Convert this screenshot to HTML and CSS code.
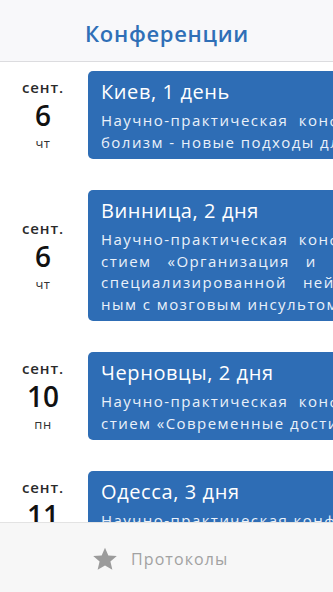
FILE: index.html
```html
<!DOCTYPE html>
<html lang="ru">
<head>
<meta charset="utf-8">
<title>Конференции</title>
<link rel="stylesheet" href="styles.css">
</head>
<body>
<div class="app">
  <header class="nav">
    <h1 class="nav-title">Конференции</h1>
  </header>
  <main class="list">
    <div class="row">
      <div class="date">
        <div class="month">сент.</div>
        <div class="day">6</div>
        <div class="wd">чт</div>
      </div>
      <div class="card">
        <div class="card-title">Киев, 1 день</div>
        <div class="card-text">
          <div class="ln">Научно-практическая&nbsp; конференция «Мета-</div>
          <div class="ln">болизм - новые подходы для лечения</div>
        </div>
      </div>
    </div>
    <div class="row">
      <div class="date">
        <div class="month">сент.</div>
        <div class="day">6</div>
        <div class="wd">чт</div>
      </div>
      <div class="card">
        <div class="card-title">Винница, 2 дня</div>
        <div class="card-text">
          <div class="ln">Научно-практическая&nbsp; конференция с уча-</div>
          <div class="ln">стием&nbsp;&nbsp; «Организация&nbsp;&nbsp; и&nbsp;&nbsp; оказание</div>
          <div class="ln">специализированной&nbsp;&nbsp; неймедицинской</div>
          <div class="ln">ным с мозговым инсультом»</div>
        </div>
      </div>
    </div>
    <div class="row">
      <div class="date">
        <div class="month">сент.</div>
        <div class="day">10</div>
        <div class="wd">пн</div>
      </div>
      <div class="card">
        <div class="card-title">Черновцы, 2 дня</div>
        <div class="card-text">
          <div class="ln">Научно-практическая&nbsp; конференция с уча-</div>
          <div class="ln">стием «Современные достижения</div>
        </div>
      </div>
    </div>
    <div class="row">
      <div class="date">
        <div class="month">сент.</div>
        <div class="day">11</div>
        <div class="wd">вт</div>
      </div>
      <div class="card">
        <div class="card-title">Одесса, 3 дня</div>
        <div class="card-text">
          <div class="ln">Научно-практическая конференция</div>
          <div class="ln">стием</div>
        </div>
      </div>
    </div>
  </main>
  <nav class="tabbar">
    <svg class="star" viewBox="0 0 24 24" width="26" height="26" aria-hidden="true">
      <path d="M12 1.5l3.1 7.2 7.8.6-5.9 5.1 1.8 7.6L12 17.9 5.2 22l1.8-7.6-5.9-5.1 7.8-.6z" fill="#9b9b9b"/>
    </svg>
    <span class="tab-label">Протоколы</span>
  </nav>
</div>
</body>
</html>
```

FILE: styles.css
```css
html, body {
  margin: 0;
  padding: 0;
  background: #ffffff;
}

body {
  width: 333px;
  height: 592px;
  overflow: hidden;
  font-family: "Open Sans", Roboto, "Liberation Sans", sans-serif;
}

.app {
  position: relative;
  width: 333px;
  height: 592px;
  overflow: hidden;
}

.nav {
  height: 62px;
  background: #f8f8fa;
  border-bottom: 1px solid #dcdcdf;
  display: flex;
  align-items: center;
  justify-content: center;
  padding-top: 4px;
  padding-left: 1px;
  box-sizing: border-box;
}

.nav-title {
  margin: 0;
  font-size: 22px;
  font-weight: 600;
  color: #2f6fb7;
  letter-spacing: 0.7px;
}

.list {
  display: flex;
  flex-direction: column;
  gap: 31px;
  padding-top: 9px;
}

.row {
  display: flex;
  align-items: center;
}

.date {
  flex: none;
  width: 88px;
  padding-right: 2px;
  box-sizing: border-box;
  display: flex;
  flex-direction: column;
  align-items: center;
  color: #1e1e1e;
}

.month {
  font-size: 15px;
  font-weight: 600;
  line-height: 20px;
  letter-spacing: 0.9px;
  color: #2a2a2a;
}

.day {
  font-size: 28px;
  font-weight: 600;
  line-height: 36px;
  color: #111;
}

.wd {
  font-size: 13px;
  line-height: 20px;
  letter-spacing: 0.5px;
  color: #333;
}

.card {
  flex: none;
  width: 420px;
  background: #2e6db5;
  border-radius: 5px;
  padding: 8px 12px 6px 13px;
  box-sizing: border-box;
  color: #ffffff;
}

.card-title {
  font-size: 20px;
  line-height: 26px;
  font-weight: 400;
  letter-spacing: 0.6px;
}

.card-text {
  margin-top: 5px;
  font-size: 15px;
  line-height: 21.5px;
  letter-spacing: 1.45px;
  color: #eaf1fa;
}

.ln {
  white-space: nowrap;
}

.tabbar {
  position: absolute;
  left: 0;
  right: 0;
  bottom: 0;
  height: 70px;
  background: #f7f7f7;
  border-top: 1px solid #e3e3e3;
  box-sizing: border-box;
  display: flex;
  align-items: center;
  padding-left: 92px;
  padding-top: 2px;
  gap: 13px;
}

.star {
  display: block;
}

.tab-label {
  font-size: 16px;
  color: #a2a2a2;
  letter-spacing: 1.1px;
}
```
